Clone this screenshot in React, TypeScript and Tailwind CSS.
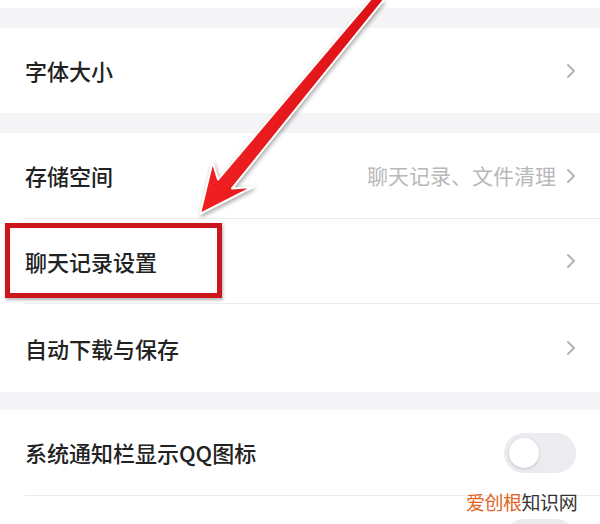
import { ReactNode } from "react";

/* ================= PARTS ================= */

function Chevron() {
  return (
    <svg width="10" height="16" viewBox="0 0 10 16" className="shrink-0">
      <polyline
        points="2,2 8,8 2,14"
        fill="none"
        stroke="#b4b4b4"
        strokeWidth="2"
        strokeLinecap="round"
        strokeLinejoin="round"
      />
    </svg>
  );
}

function Toggle() {
  return (
    <div className="w-[72px] h-[40px] rounded-full bg-[#ebebf0] flex items-center px-[5px] shrink-0">
      <div className="w-[30px] h-[30px] rounded-full bg-white shadow-[0_1px_3px_rgba(0,0,0,0.18)]" />
    </div>
  );
}

interface RowProps {
  label: string;
  height: string;
  right?: ReactNode;
}

function Row({ label, height, right }: RowProps) {
  return (
    <div className={`flex items-center justify-between pl-[25px] pr-[24px] bg-white ${height}`}>
      <span className="text-[22px] font-medium text-[#222]">{label}</span>
      {right ?? <Chevron />}
    </div>
  );
}

function Divider() {
  return (
    <div className="bg-white">
      <div className="ml-[25px] h-px bg-[#ececee]" />
    </div>
  );
}

/* ================= ARROW (annotation) ================= */

function Arrow() {
  return (
    <svg
      className="absolute inset-0 pointer-events-none drop-shadow-[1px_2px_2px_rgba(0,0,0,0.35)]"
      width="600"
      height="524"
      viewBox="0 0 600 524"
    >
      <defs>
        <linearGradient id="shaft" x1="0" y1="0" x2="1" y2="0.4">
          <stop offset="0" stopColor="#ff2a2a" />
          <stop offset="1" stopColor="#d40c12" />
        </linearGradient>
      </defs>
      <polygon
        points="200,214 253,187 232,188.5 395,-14 387,-20 218,179.6 212.6,162"
        fill="url(#shaft)"
        stroke="#ffffff"
        strokeWidth="2"
        strokeLinejoin="round"
      />
    </svg>
  );
}

/* ================= MAIN ================= */

export default function App() {
  return (
    <div
      className="relative w-[600px] h-[524px] overflow-hidden bg-[#f5f5f8]"
      style={{ fontFamily: '"Noto Sans CJK SC", "Noto Sans", sans-serif' }}
    >
      <div className="h-2 bg-white" />
      <div className="h-5" />

      <Row label="字体大小" height="h-[85px]" />

      <div className="h-5" />

      <Row
        label="存储空间"
        height="h-[85px]"
        right={
          <div className="flex items-center gap-[10px]">
            <span className="text-[21px] text-[#b8b8ba]">聊天记录、文件清理</span>
            <Chevron />
          </div>
        }
      />
      <Divider />
      <Row label="聊天记录设置" height="h-[84px]" />
      <Divider />
      <Row label="自动下载与保存" height="h-[88px]" />

      <div className="h-[18px]" />

      <Row label="系统通知栏显示QQ图标" height="h-[85px]" right={<Toggle />} />
      <Divider />
      <Row label="锁屏显示消息弹框" height="h-[85px]" right={<Toggle />} />

      {/* red highlight box */}
      <div className="absolute left-[5px] top-[223px] w-[217px] h-[75px] border-[5px] border-[#cc161c] shadow-[1px_2px_3px_rgba(0,0,0,0.3)]" />

      <Arrow />

      {/* watermark */}
      <div className="absolute left-[466px] top-[492px] text-[19px] leading-none tracking-tight">
        <span className="text-[#e0651f]">爱创根</span>
        <span className="text-[#333]">知识网</span>
      </div>
    </div>
  );
}
